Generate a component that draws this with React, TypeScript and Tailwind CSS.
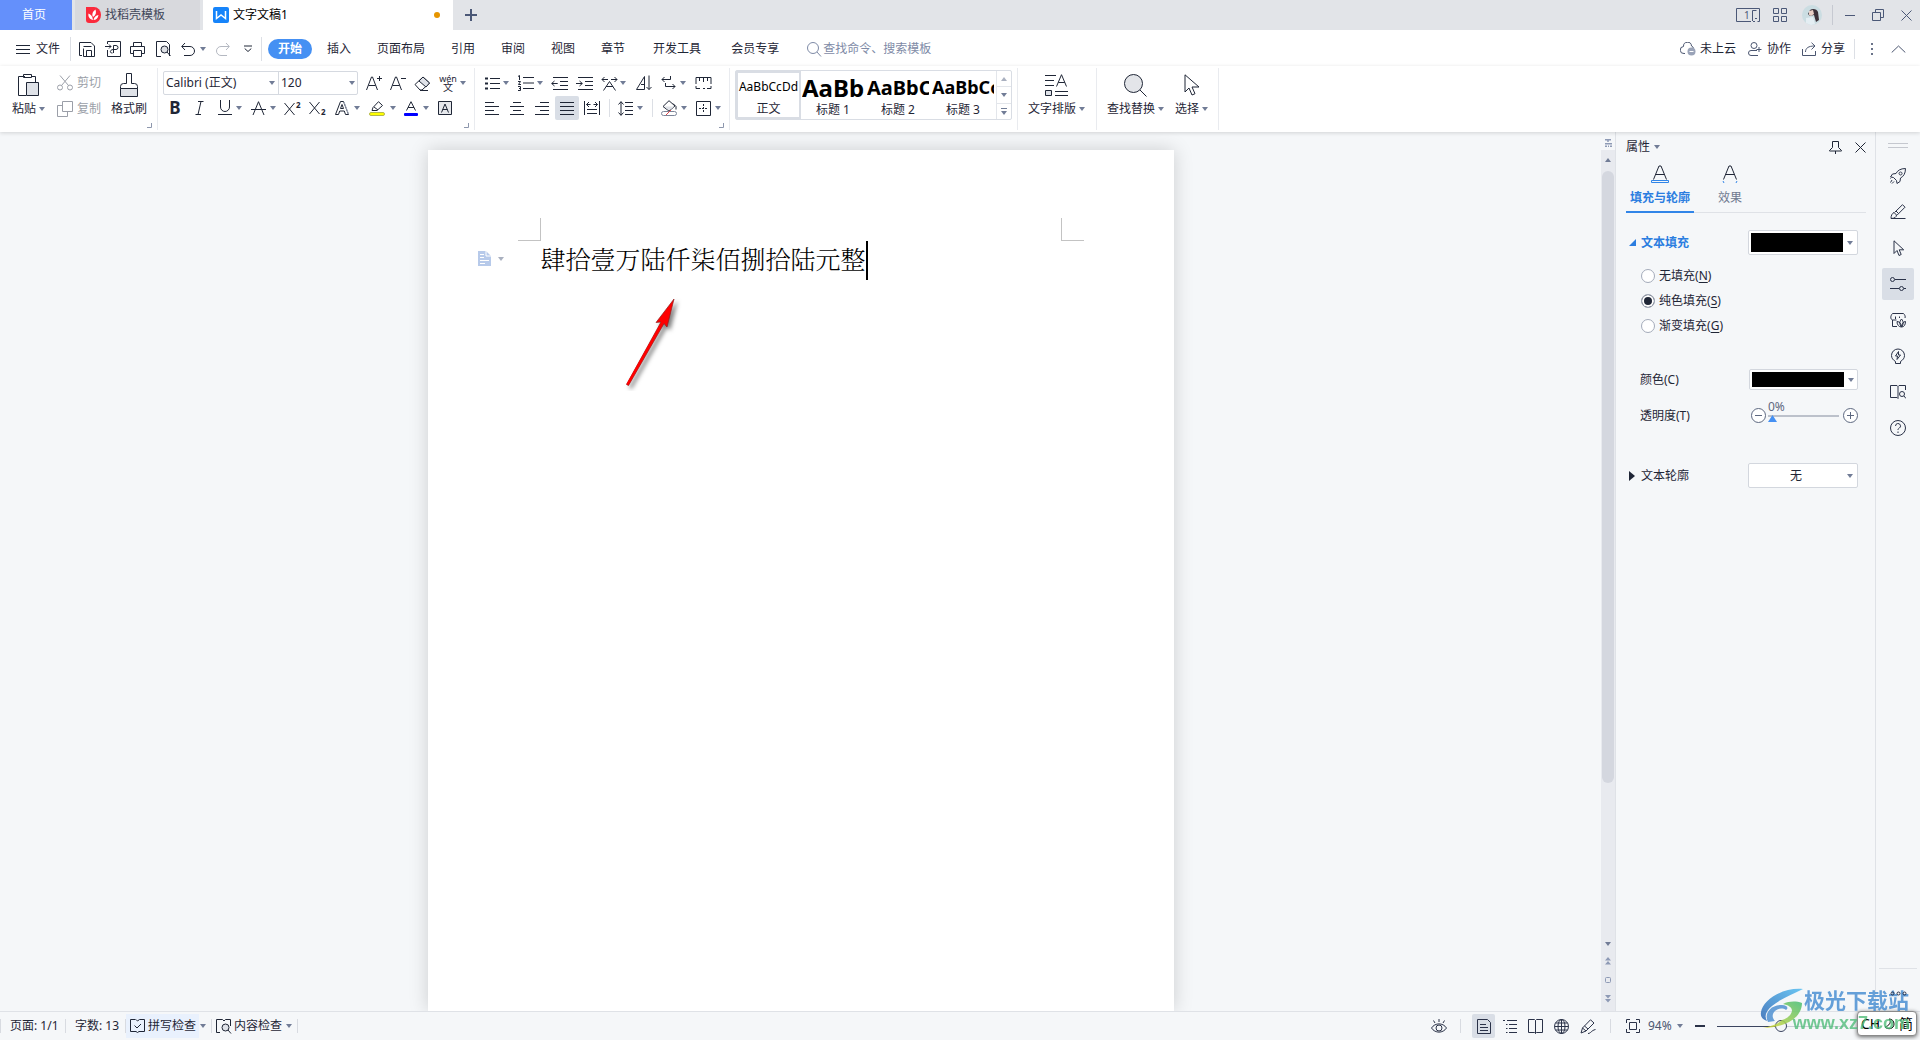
import React from "react";

type Kids = { children?: React.ReactNode };

function Ic({ w, h, sw = 1, className = "", children }: Kids & { w: number; h: number; sw?: number; className?: string }) {
  return (
    <svg width={w} height={h} viewBox={`0 0 ${w} ${h}`} fill="none" stroke="currentColor" strokeWidth={sw} className={"shrink-0 " + className} aria-hidden="true">
      {children}
    </svg>
  );
}

function Caret({ className = "" }: { className?: string }) {
  return (
    <svg width="6" height="4" viewBox="0 0 6 4" className={"shrink-0 text-[#717c96] " + className} aria-hidden="true">
      <path d="M0 0h6L3 4z" fill="currentColor" />
    </svg>
  );
}

function Btn({ label, className = "", children }: Kids & { label: string; className?: string }) {
  return (
    <button type="button" aria-label={label} title={label} className={"flex h-6 shrink-0 items-center " + className}>
      {children}
    </button>
  );
}

function Corner() {
  return (
    <Ic w={5} h={5} className="absolute bottom-[2px] right-[5px] text-[#8d97ad]">
      <path d="M4.500 0v4.500H0" />
    </Ic>
  );
}

function TitleBar() {
  return (
    <header className="flex h-[30px] shrink-0 bg-[#e2e4e8] text-xs">
      <button type="button" className="w-[72px] bg-[#6490fb] pr-1 text-white">首页</button>
      <button type="button" className="ml-[3px] flex w-[125px] items-center gap-1 bg-[#d8d9dd] pl-[11px] text-[#3f4659]">
        <svg width="15" height="16" viewBox="0 0 15 16" aria-hidden="true">
          <path d="M0 0h8a7 8 0 0 1 0 16H3a3 3 0 0 1-3-3z" fill="#fb2a3c" />
          <path d="M7 13C3 12 2 9 2.500 6.500 5 7.500 6.500 9 7 13zM7 10C5.500 7 7 4 9.500 2.500 10.500 5.500 10 8 7 10zM7.500 13C8 10 10 8.500 12.500 8 12 11.500 10 13 7.500 13z" fill="#fff" />
        </svg>
        找稻壳模板
      </button>
      <button type="button" className="ml-[3px] flex w-[250px] items-center bg-white pl-[10px] pr-[13px] text-black">
        <svg width="16" height="16" viewBox="0 0 16 16" className="mr-1" aria-hidden="true">
          <rect width="16" height="16" rx="2" fill="#1684fa" />
          <path d="M3.500 4v7.500L8 8l4.500 3.500V4" fill="none" stroke="#fff" strokeWidth="1.500" />
        </svg>
        文字文稿1
        <span className="ml-auto size-[6px] rounded-full bg-[#e69500]" />
      </button>
      <button type="button" aria-label="新建" className="flex w-9 items-center justify-center text-[#4b5877]">
        <Ic w={12} h={12} sw={2}><path d="M6 0v12M0 6h12" /></Ic>
      </button>
      <div className="ml-auto flex items-center pr-2 text-[#4b5877]">
        <button type="button" aria-label="窗口" className="mr-[13px]">
          <Ic w={24} h={14}>
            <path d="M15 13.500H.5V.5h23v13h-2M16.500 13V2.500h4M17 13.500h2M19 10.500h2" />
            <text x="8" y="11" fontSize="10" fill="currentColor" stroke="none">1</text>
          </Ic>
        </button>
        <button type="button" aria-label="应用" className="mr-[15px]">
          <Ic w={14} h={14}><path d="M.5.5h5v5h-5zM8.500.5h5v5h-5zM.5 8.500h5v5h-5zM8.500 8.500h5v5h-5z" /></Ic>
        </button>
        <button type="button" aria-label="用户">
          <svg width="20" height="20" viewBox="0 0 20 20" aria-hidden="true">
            <circle cx="10" cy="10" r="10" fill="#cbdde2" />
            <path d="M8 5c3-2 7-1 8 2l1 8-3 2-2-7-4 1-2-2z" fill="#3b3038" />
            <path d="M7 6l4-1 1 4-3 2-2-1z" fill="#e9cfc6" />
            <path d="M4 13l7-1 2 7-4 1-5-2z" fill="#e4eef3" />
          </svg>
        </button>
        <span className="ml-[10px] h-[20px] w-px bg-[#c6c9d1]" />
        <button type="button" aria-label="最小化" className="ml-3"><Ic w={10} h={12}><path d="M0 6.500h10" /></Ic></button>
        <button type="button" aria-label="还原" className="ml-[17px]">
          <Ic w={12} h={12}><path d="M.5 3.500h8v8h-8zM3.500 3.500v-3h8v8h-3" /></Ic>
        </button>
        <button type="button" aria-label="关闭" className="ml-[17px]"><Ic w={11} h={11}><path d="M.5.5l10 10M10.500.5l-10 10" /></Ic></button>
      </div>
    </header>
  );
}

const TABS = ["插入", "页面布局", "引用", "审阅", "视图", "章节"];

function MenuBar() {
  return (
    <nav className="flex h-9 shrink-0 items-center bg-white pt-[2px] text-xs text-[#1f2636]">
      <button type="button" className="ml-4 flex items-center gap-[6px]">
        <Ic w={14} h={11}><path d="M0 1.500h14M0 5.500h14M0 9.500h14" /></Ic>
        文件
      </button>
      <span className="ml-[10px] h-6 w-px bg-[#dcdfe5]" />
      <button type="button" aria-label="保存" className="ml-2">
        <Ic w={16} h={15}><path d="M12 .5H.5v13H3M12 .5l3.500 3.500v10.500h-11V6.500M7.500 14V8.500h5V14M4.500 4.500h8" /></Ic>
      </button>
      <button type="button" aria-label="输出为PDF" className="ml-[10px]">
        <Ic w={16} h={16}><path d="M2.500 3V.5h13v15h-13V9M0 5.500h6M4 3.500l2 2-2 2M8.500 12V4.500h2.500a2 2 0 0 1 0 4H8.500M8.500 8.500c-4 0-4 4-1 3.500" /></Ic>
      </button>
      <button type="button" aria-label="打印" className="ml-[9px]">
        <Ic w={15} h={15}><path d="M3.500 4.500v-4h8v4M3.500 11.500h-3v-7h14v7h-3M3.500 8.500h8v6h-8z" /></Ic>
      </button>
      <button type="button" aria-label="打印预览" className="ml-[11px]">
        <Ic w={15} h={16}><path d="M5 15.500H.5V.5h10l3 3V15" /><circle cx="8.500" cy="8.500" r="3.500" fill="#dfe1e5" /><path d="M11 11l3.500 4" /></Ic>
      </button>
      <button type="button" aria-label="撤销" className="ml-[10px]">
        <Ic w={14} h={13}><path d="M4 0L.7 3.500 4 7M1 3.500h8a4.500 4.500 0 0 1 0 9H3" /></Ic>
      </button>
      <Caret className="ml-[5px]" />
      <button type="button" aria-label="重做" className="ml-[10px] text-[#b4b8c1]">
        <Ic w={14} h={13}><path d="M10 0l3.300 3.500L10 7M13 3.500H5a4.500 4.500 0 0 0 0 9h6" /></Ic>
      </button>
      <button type="button" aria-label="自定义" className="ml-[14px]">
        <Ic w={8} h={8}><path d="M0 1h8M.7 3.500l3.300 3 3.300-3" /></Ic>
      </button>
      <span className="ml-[9px] h-6 w-px bg-[#dcdfe5]" />
      <button type="button" className="ml-[6px] h-5 w-11 rounded-full bg-[#4590f3] font-bold text-white">开始</button>
      <div className="ml-[2px] flex">
        {TABS.map((t) => (
          <button type="button" key={t} className="px-[13px]">{t}</button>
        ))}
        <button type="button" className="px-[15px]">开发工具</button>
        <button type="button" className="px-[15px]">会员专享</button>
      </div>
      <label className="ml-[13px] flex items-center text-[#7e8aa6]">
        <Ic w={15} h={15}><circle cx="6" cy="6" r="5.500" /><path d="M10 10l4 4.500" /></Ic>
        <input type="text" aria-label="查找" placeholder="查找命令、搜索模板" className="ml-px w-[120px] bg-transparent text-xs outline-none placeholder:text-[#7e8aa6]" />
      </label>
      <div className="ml-auto flex items-center pr-[14px]">
        <button type="button" className="flex items-center gap-1">
          <Ic w={16} h={14} className="text-[#4b5670]">
            <path d="M5 11.500H4A3.500 3.500 0 0 1 3.500 4.500 4 4 0 0 1 11.500 4" /><path d="M11.500 4a3 3 0 0 1 2 3" />
            <circle cx="11.500" cy="9.500" r="4" fill="#9aa3b8" stroke="none" /><path d="M9.500 9.500h4" stroke="#fff" />
          </Ic>
          未上云
        </button>
        <button type="button" className="ml-3 flex items-center gap-[5px]">
          <Ic w={14} h={14} className="text-[#4b5670]"><circle cx="6" cy="3.500" r="3" /><path d="M9 8.500H3a2.500 2.500 0 0 0 0 5h7M8.500 7.500h5M11 5v5" /></Ic>
          协作
        </button>
        <button type="button" className="ml-[11px] flex items-center gap-[5px]">
          <Ic w={14} h={14} className="text-[#4b5670]"><path d="M.5 7v6.500h13V9M3.500 10c0-4 3-6 9-6M9.500.7L13 4 9.500 7.500" /></Ic>
          分享
        </button>
        <span className="ml-[9px] h-5 w-px bg-[#dcdfe5]" />
        <button type="button" aria-label="更多" className="ml-4">
          <svg width="3" height="12" viewBox="0 0 3 12" fill="#6a7389"><path d="M0 0h2v2H0zM0 5h2v2H0zM0 10h2v2H0z" /></svg>
        </button>
        <button type="button" aria-label="收起" className="ml-[17px]"><Ic w={15} h={8} className="text-[#4b5670]"><path d="M.7 7.500l6.800-6.500 6.800 6.500" /></Ic></button>
      </div>
    </nav>
  );
}

function Group({ className = "", children }: Kids & { className?: string }) {
  return <section className={"relative flex h-[62px] shrink-0 border-r border-[#e9ebef] pt-[2px] " + className}>{children}</section>;
}

function BigBtn({ text, caret = true, className = "", children }: Kids & { text: string; caret?: boolean; className?: string }) {
  return (
    <button type="button" className={"flex flex-col items-center gap-[3px] pt-[3px] " + className}>
      <span className="flex h-6 items-center">{children}</span>
      <span className="flex items-center gap-[3px] leading-[18px]">{text}{caret && <Caret />}</span>
    </button>
  );
}

const STYLES = [
  { name: "标题 1", cls: "text-[24px]" },
  { name: "标题 2", cls: "text-[20px]" },
  { name: "标题 3", cls: "text-[18px]" },
];

function Ribbon() {
  return (
    <div className="z-10 flex h-[66px] shrink-0 bg-white pt-[2px] text-xs text-[#1f2636] shadow-[0_1px_4px_rgba(0,0,0,0.15)]">
      <Group className="w-[158px] pl-3">
        <BigBtn text="粘贴">
          <Ic w={21} h={24}><path d="M7 3.500H.5v19H8M14 3.500h3.500V9M5.500 1.500h8v3h-8z" /><path d="M8.500 9.500h12v13h-12z" fill="#dfe2e8" /></Ic>
        </BigBtn>
        <div className="ml-3 flex flex-col gap-[2px] pt-px text-[#9b9fa8]">
          <Btn label="剪切" className="gap-1">
            <Ic w={16} h={16}><circle cx="3" cy="12.500" r="2.500" /><circle cx="13" cy="12.500" r="2.500" /><path d="M3 .5l8.500 10M13 .5l-8.500 10" /></Ic>
            剪切
          </Btn>
          <Btn label="复制" className="gap-1">
            <Ic w={16} h={16}><path d="M5.500.5h10v10h-10zM5.500 4.500h-5v11h10v-5" /></Ic>
            复制
          </Btn>
        </div>
        <BigBtn text="格式刷" caret={false} className="ml-[10px]">
          <Ic w={18} h={24}><path d="M6.500 10.500V.5h5v10h3a3 3 0 0 1 3 3v2H.5v-2a3 3 0 0 1 3-3z" /><path d="M.5 15.500h17v8H.5z" fill="#dfe2e8" /></Ic>
        </BigBtn>
        <Corner />
      </Group>

      <Group className="w-[317px] flex-col gap-px pl-[5px]">
        <div className="flex items-center pt-px">
          <div className="flex h-6 rounded-[2px] border border-[#d5d9e0]">
            <label className="relative flex w-[115px] items-center border-r border-[#d5d9e0]">
              <select aria-label="字体" className="h-full w-full appearance-none bg-transparent pl-[2px] outline-none"><option>Calibri (正文)</option></select>
              <Caret className="pointer-events-none absolute right-[3px]" />
            </label>
            <label className="relative flex w-[78px] items-center">
              <select aria-label="字号" className="h-full w-full appearance-none bg-transparent pl-[2px] outline-none"><option>120</option></select>
              <Caret className="pointer-events-none absolute right-[2px]" />
            </label>
          </div>
          <Btn label="增大字号" className="ml-[8px]"><Ic w={16} h={16}><path d="M.5 15L5.500 2h1l5 13M2.500 10.500h7M11 3.500h5M13.500 1v5" /></Ic></Btn>
          <Btn label="减小字号" className="ml-2"><Ic w={16} h={16}><path d="M.5 15L5.500 2h1l5 13M2.500 10.500h7M11 3.500h5" /></Ic></Btn>
          <Btn label="清除格式" className="ml-2"><Ic w={17} h={15}><path d="M1 8.500L9 1l6.500 6L8 14H6z" /><path d="M5 5l7 6 3.500-4L9 1z" fill="#dfe2e8" /><path d="M6 14.500h8" /></Ic></Btn>
          <Btn label="拼音指南" className="ml-[9px] w-4 flex-col justify-center">
            <span className="h-[8px] text-[9px] leading-[8px]">wén</span>
            <span className="h-[8px] text-[10px] leading-[8px]">文</span>
          </Btn>
          <Caret className="ml-1" />
        </div>
        <div className="flex items-center">
          <Btn label="加粗" className="w-5 justify-center pl-1 text-[17px] font-bold">B</Btn>
          <Btn label="倾斜" className="ml-3"><Ic w={9} h={14}><path d="M3 .5h5.500M.5 13.500H6M6 .5l-3 13" /></Ic></Btn>
          <Btn label="下划线" className="ml-[14px]"><Ic w={14} h={16}><path d="M2.500 0v7a4.500 4.500 0 0 0 9 0V0M0 14.500h14" /></Ic></Btn>
          <Caret className="ml-[4px]" />
          <Btn label="删除线" className="ml-[9px]"><Ic w={15} h={15}><path d="M2 14L7.500.7 13 14M0 8.500h15" /></Ic></Btn>
          <Caret className="ml-[4px]" />
          <Btn label="上标" className="ml-2"><Ic w={18} h={15}><path d="M.5 2l10 12M10.500 2L.5 14" /><text x="12" y="7" fontSize="8" fontWeight="bold" fill="currentColor" stroke="none">2</text></Ic></Btn>
          <Btn label="下标" className="ml-[7px]"><Ic w={18} h={15}><path d="M.5 1l10 12M10.500 1L.5 13" /><text x="12" y="14" fontSize="8" fontWeight="bold" fill="currentColor" stroke="none">2</text></Ic></Btn>
          <Btn label="文字效果" className="ml-[8px]"><Ic w={14} h={14}><path d="M.5 13.500L5.500.5h3l5 13h-3L9.300 10H4.700l-1.200 3.500zM5.500 7.500h3L7 3.500z" /><path d="M9 1l4.500 12" stroke="#a3abbb" /></Ic></Btn>
          <Caret className="ml-[5px]" />
          <Btn label="突出显示" className="ml-[9px]"><Ic w={16} h={15}><path d="M3 9.500l1-3L9.500.7l4 3.800L8 9.500zM5 6l4 3" /><rect x=".5" y="11.500" width="15" height="3" rx="1.500" fill="#ffff00" stroke="#b5b84c" /></Ic></Btn>
          <Caret className="ml-[5px]" />
          <Btn label="字体颜色" className="ml-2"><Ic w={14} h={15}><path d="M2.500 9.500L7 .7l4.500 8.800M4 6.500h6" /><rect y="12" width="14" height="3" rx="1" fill="#0000ff" stroke="none" /></Ic></Btn>
          <Caret className="ml-[5px]" />
          <Btn label="字符底纹" className="ml-[9px]"><Ic w={14} h={14}><path d="M.5.5h13v13H.5z" fill="#e6e8ec" /><path d="M3.500 11.500L7 3l3.500 8.500M4.500 8.500h5" /></Ic></Btn>
        </div>
        <Corner />
      </Group>

      <Group className="w-[255px] flex-col gap-px pl-[10px]">
        <div className="flex items-center pt-px">
          <Btn label="项目符号"><Ic w={15} h={15}><path d="M5 2.500h10M5 7.500h10M5 12.500h10" /><path d="M0 2.500h3M0 7.500h3M0 12.500h3" strokeWidth="2" /></Ic></Btn>
          <Caret className="ml-[3px]" />
          <Btn label="编号" className="ml-[9px]"><Ic w={16} h={16}><path d="M5 2.500h11M5 8h11M5 13.500h11M0 1.500l1.500-1V5M0 6.500h2.500L.5 9.500h2.500M0 11.500h2.500v4H0M1 13.500h1" /></Ic></Btn>
          <Caret className="ml-[3px]" />
          <Btn label="减少缩进" className="ml-[8px]"><Ic w={17} h={13}><path d="M2 .5h15M9 4.500h8M9 8.500h8M2 12.500h15M.7 6.500h6M3.500 4L.7 6.500 3.500 9" /></Ic></Btn>
          <Btn label="增加缩进" className="ml-[8px]"><Ic w={17} h={13}><path d="M2 .5h15M9 4.500h8M9 8.500h8M2 12.500h15M0 6.500h6.300M3.500 4l2.800 2.500L3.500 9" /></Ic></Btn>
          <Btn label="中文版式" className="ml-[8px]"><Ic w={17} h={15}><path d="M2.500 14.500L8.500 5.500l6 9M5 10.500h7M1 3.500h6M3.500 1L1 3.500 3.500 6M10 3.500h6M13.500 1L16 3.500 13.500 6" /></Ic></Btn>
          <Caret className="ml-[2px]" />
          <Btn label="排序" className="ml-[10px]"><Ic w={16} h={16}><path d="M.5 14.500l8-13v13zM5 9.500h3.500M13 .5v14M10.500 12l2.500 2.500 2.500-2.500" /></Ic></Btn>
          <Btn label="显示标记" className="ml-[9px]"><Ic w={15} h={14}><path d="M3.500 1L1 3.500 3.500 6M1 3.500h8.500V0M4.500 7v3.500H14M11.500 8l2.500 2.500-2.500 2.500" /></Ic></Btn>
          <Caret className="ml-[4px]" />
          <Btn label="制表位" className="ml-[9px]"><Ic w={17} h={12}><path d="M1 7V.5h15V7M4.500 1v3M8.500 1v4M12.500 1v3M1 9v2.500h4M8 11.500h2M12 11.500h4V9" /></Ic></Btn>
        </div>
        <div className="flex items-center">
          <Btn label="左对齐"><Ic w={14} h={13}><path d="M0 .5h9M0 4.500h14M0 8.500h9M0 12.500h14" /></Ic></Btn>
          <Btn label="居中" className="ml-[11px]"><Ic w={14} h={13}><path d="M3 .5h8M0 4.500h14M3 8.500h8M0 12.500h14" /></Ic></Btn>
          <Btn label="右对齐" className="ml-[11px]"><Ic w={14} h={13}><path d="M5 .5h9M0 4.500h14M5 8.500h9M0 12.500h14" /></Ic></Btn>
          <Btn label="两端对齐" className="ml-[6px] w-6 justify-center rounded-[2px] bg-[#d9dee6]"><Ic w={14} h={13}><path d="M0 .5h14M0 4.500h14M0 8.500h14M0 12.500h14" /></Ic></Btn>
          <Btn label="分散对齐" className="ml-[5px]"><Ic w={16} h={14}><path d="M.5 0v14M15.500 0v14M2.500 3.500h4M9.500 3.500h4M5 1L2.500 3.500 5 6M11 1l2.500 2.500L11 6M3 8.500h10M3 12.500h10" /></Ic></Btn>
          <span className="ml-[9px] h-[18px] w-px bg-[#dcdfe5]" />
          <Btn label="行距" className="ml-[8px]"><Ic w={15} h={15}><path d="M7 1.500h8M7 5.500h8M7 9.500h8M7 13.500h8M3 .7v13.600M.5 3.500L3 .7l2.500 2.800M.5 11.500L3 14.300l2.500-2.800" /></Ic></Btn>
          <Caret className="ml-[4px]" />
          <span className="ml-[9px] h-[18px] w-px bg-[#dcdfe5]" />
          <Btn label="底纹颜色" className="ml-[8px]"><Ic w={16} h={16}><path d="M2 6.500L8 .7l6 5.300-6 5z" /><path d="M3 6.500h10.500L8 10.500z" fill="#dfe2e8" stroke="none" /><path d="M12 3.500l3 3v3" /><rect x=".5" y="11.500" width="15" height="4" rx="2" stroke="#7c8598" fill="#fff" /><path d="M5 15l5-5" stroke="#e0484d" /></Ic></Btn>
          <Caret className="ml-[4px]" />
          <Btn label="边框" className="ml-[9px]"><Ic w={15} h={15}><path d="M.5.5h14v14H.5z" /><path d="M7.500 3v9M3 7.500h9" strokeDasharray="2 1" /></Ic></Btn>
          <Caret className="ml-[4px]" />
        </div>
        <Corner />
      </Group>

      <Group className="w-[288px] pl-[5px]">
        <div className="flex h-[50px] rounded-[2px] border border-[#d9dde4]">
          <button type="button" className="flex w-[65px] flex-col items-center border-2 border-[#d9dde4]">
            <span className="h-[29px] text-xs leading-[28px] text-black">AaBbCcDd</span>
            <span className="leading-[16px]">正文</span>
          </button>
          {STYLES.map((s) => (
            <button type="button" key={s.name} className="flex w-[65px] flex-col items-center overflow-hidden pl-px pr-[2px] pt-[2px]">
              <span className={"h-[29px] w-full overflow-hidden whitespace-nowrap text-left font-bold leading-[29px] text-black " + s.cls}>AaBbCcDd</span>
              <span className="leading-[16px]">{s.name}</span>
            </button>
          ))}
          <div className="flex w-[15px] flex-col border-l border-[#e3e6eb]">
            <button type="button" aria-label="上一行" className="flex flex-1 items-center justify-center border-b border-[#e3e6eb]"><Caret className="rotate-180 opacity-60" /></button>
            <button type="button" aria-label="下一行" className="flex flex-1 items-center justify-center border-b border-[#e3e6eb]"><Caret /></button>
            <button type="button" aria-label="更多样式" className="flex flex-1 flex-col items-center justify-center gap-[2px]"><span className="h-px w-[6px] bg-[#717c96]" /><Caret /></button>
          </div>
        </div>
      </Group>

      <Group className="w-[79px] pl-[10px]">
        <BigBtn text="文字排版">
          <Ic w={23} h={23}><path d="M0 1.500h11M0 6.500h9M0 11.500h9M10 21.500h13M10 17.500h13M11.500 12.500L16.500.7l5 11.800M13.300 8.500h6.500" /><path d="M.5 16.500h6v5h-6z" fill="#dfe2e8" /></Ic>
        </BigBtn>
      </Group>
      <Group className="w-[122px] gap-[11px] pl-[10px]">
        <BigBtn text="查找替换">
          <Ic w={23} h={23}><circle cx="9.500" cy="9.500" r="9" fill="#e3e5e9" /><path d="M16 16l6.500 6.500" /></Ic>
        </BigBtn>
        <BigBtn text="选择">
          <Ic w={16} h={22}><path d="M1 .8v17.200l4-4 3 7 3-1.300-3-6.700h7z" /></Ic>
        </BigBtn>
      </Group>
    </div>
  );
}

function PageArea() {
  return (
    <main className="relative flex-1 overflow-hidden bg-[#f5f7f9] pt-[18px]">
      <article className="relative mx-auto h-full w-[746px] bg-white px-[90px] pt-[68px] shadow-[0_0_18px_rgba(0,0,0,0.17)]">
        <div className="flex justify-between">
          <span className="size-[23px] border-b border-r border-[#c3c3c3]" />
          <span className="size-[23px] border-b border-l border-[#c3c3c3]" />
        </div>
        <div className="flex h-[39px] pl-[23px] font-['Noto_Serif_CJK_SC','Noto_Sans_CJK_SC',serif] text-[25px] font-light leading-[34px] text-black">
          <p className="whitespace-nowrap">肆拾壹万陆仟柒佰捌拾陆元整</p>
          <span className="h-[39px] w-[2px] bg-black" />
        </div>
        <button type="button" aria-label="段落布局" className="absolute left-[50px] top-[101px] flex items-center gap-[7px]">
          <svg width="13" height="15" viewBox="0 0 13 15" aria-hidden="true">
            <path d="M0 0h8l5 5v10H0z" fill="#b7caea" />
            <path d="M8 0v5h5M2 3.500h4M2 6.500h4M2 9.500h9M2 12.500h5" stroke="#fff" fill="none" />
          </svg>
          <Caret className="opacity-60" />
        </button>
        <svg width="64" height="98" viewBox="0 0 64 98" className="absolute left-[190px] top-[143px]" aria-hidden="true">
          <g className="drop-shadow-[3px_3px_2px_rgba(0,0,0,0.5)]">
            <path d="M8.500 91.500L10.500 92.500 46 30.500 49 34 56 6 38 29.500 43 29z" fill="#fe0000" stroke="#8f1d1d" strokeWidth=".7" />
            <path d="M9.500 91.500L45 28.500" stroke="#fe0000" strokeWidth="2.500" />
          </g>
        </svg>
      </article>
    </main>
  );
}

function ScrollBar() {
  return (
    <div className="flex w-[14px] shrink-0 flex-col items-center bg-[#e8eaef] text-[#8e9ab5]">
      <div className="flex h-[18px] w-full items-center justify-center bg-[#f5f7f9] pt-1"><Ic w={8} h={8}><path d="M1 .8h6M4 1v2M1 7.200h2M4 7.200h1M6 7.200h2M1 4.800h7" strokeWidth="1.500" /></Ic></div>
      <Caret className="mt-2 rotate-180" />
      <div className="mt-[9px] h-[612px] w-3 rounded-full bg-[#d4d7df]" />
      <div className="mt-auto flex flex-col items-center pb-[8px]">
        <Caret />
        <svg width="6" height="8" viewBox="0 0 6 8" fill="currentColor" className="mt-[11px]"><path d="M3 0l3 3.500H0zM3 4l3 3.500H0z" /></svg>
        <Ic w={6} h={6} className="mt-3"><rect x=".5" y=".5" width="5" height="5" rx="1" /></Ic>
        <svg width="6" height="8" viewBox="0 0 6 8" fill="currentColor" className="mt-3"><path d="M3 3.500l3-3.500H0zM3 7.500L6 4H0z" /></svg>
      </div>
    </div>
  );
}

const FILLS = [
  { t: "无填充", k: "N" },
  { t: "纯色填充", k: "S" },
  { t: "渐变填充", k: "G" },
];

function Panel() {
  return (
    <aside className="flex w-[261px] shrink-0 flex-col border-x border-[#dfe2e7] bg-[#f5f7f9] pl-[10px] pr-[9px] text-xs text-[#1f2636]">
      <div className="flex h-[30px] items-center">
        <button type="button" className="flex items-center gap-[4px]">属性<Caret /></button>
        <button type="button" aria-label="固定" className="ml-auto"><Ic w={13} h={13}><path d="M3.500.5h6v6l3 3v.5H.5v-.5l3-3zM6.500 10v3" /></Ic></button>
        <button type="button" aria-label="关闭" className="ml-[13px]"><Ic w={11} h={11}><path d="M.5.5l10 10M10.500.5l-10 10" /></Ic></button>
      </div>
      <div className="flex h-[51px] border-b border-[#dfe2e7]">
        <button type="button" className="-mb-px flex w-[68px] flex-col items-center border-b-2 border-[#3185e8] font-bold text-[#2b7de0]">
          <Ic w={18} h={20} className="mt-[2px] text-[#1f2636]"><path d="M2.500 15.500L8 2h2l5.500 13.500M5 10.500h8" /><path d="M.5 16.500h17v2H.5z" stroke="#3185e8" /></Ic>
          <span className="mt-[6px]">填充与轮廓</span>
        </button>
        <button type="button" className="ml-[2px] flex w-[68px] flex-col items-center text-[#707a90]">
          <Ic w={18} h={20} className="mt-[2px] text-[#1f2636]"><path d="M2.500 15.500L8 2h2l5.500 13.500M5 10.500h8" /><path d="M2 17l1 2M16 17l-1 2" stroke="#3185e8" /></Ic>
          <span className="mt-[6px]">效果</span>
        </button>
      </div>
      <div className="pr-2">
        <div className="mt-[17px] flex h-[25px] items-center">
          <button type="button" className="flex items-center gap-[5px] pl-[3px] font-bold text-[#2b7de0]">
            <svg width="7" height="7" viewBox="0 0 7 7" fill="currentColor"><path d="M7 0v7H0z" /></svg>
            文本填充
          </button>
          <button type="button" aria-label="填充颜色" className="ml-auto flex h-[25px] w-[110px] items-center justify-between rounded-[2px] border border-[#d3d7de] bg-white pl-[2px] pr-1">
            <span className="h-[19px] w-[92px] bg-black" /><Caret />
          </button>
        </div>
        <div className="mt-[8px] flex flex-col pl-[15px]">
          {FILLS.map((f) => (
            <label key={f.k} className="flex h-[25px] items-center gap-1">
              <input type="radio" name="fill" defaultChecked={f.k === "S"} className="size-[14px] appearance-none rounded-full border border-[#a4abba] bg-white checked:bg-[#1f2636] checked:shadow-[inset_0_0_0_2px_#fff]" />
              <span>{f.t}(<u className="underline-offset-2">{f.k}</u>)</span>
            </label>
          ))}
        </div>
        <div className="mt-[31px] flex h-[21px] items-center pl-[14px]">
          颜色(C)
          <button type="button" aria-label="颜色" className="ml-auto flex h-[21px] w-[109px] items-center justify-between rounded-[2px] border border-[#d3d7de] bg-white pl-[2px] pr-[3px]">
            <span className="h-[15px] w-[92px] bg-black" /><Caret />
          </button>
        </div>
        <div className="mt-[15px] flex h-[21px] items-center pl-[14px]">
          <label htmlFor="opacity">透明度(T)</label>
          <button type="button" aria-label="减少" className="ml-auto text-[#5d6880]"><Ic w={15} h={15}><circle cx="7.500" cy="7.500" r="7" fill="#fff" /><path d="M4 7.500h7" /></Ic></button>
          <div className="relative mx-[2px] flex h-[21px] w-[71px] items-center">
            <output className="absolute -top-[6px] left-0 text-[#5f6880]">0%</output>
            <input id="opacity" type="range" defaultValue={0} className="h-[2px] w-full appearance-none bg-[#bcc1cb] [&::-webkit-slider-thumb]:mt-[6px] [&::-webkit-slider-thumb]:h-[7px] [&::-webkit-slider-thumb]:w-[9px] [&::-webkit-slider-thumb]:appearance-none [&::-webkit-slider-thumb]:bg-[#4590f3] [&::-webkit-slider-thumb]:[clip-path:polygon(50%_0,100%_100%,0_100%)]" />
          </div>
          <button type="button" aria-label="增加" className="ml-[2px] text-[#5d6880]"><Ic w={15} h={15}><circle cx="7.500" cy="7.500" r="7" fill="#fff" /><path d="M4 7.500h7M7.500 4v7" /></Ic></button>
        </div>
        <div className="mt-[37px] flex h-[25px] items-center">
          <button type="button" className="flex items-center gap-[6px] pl-[3px]">
            <svg width="6" height="10" viewBox="0 0 6 10" fill="#1f2636"><path d="M0 0l6 5-6 5z" /></svg>
            文本轮廓
          </button>
          <label className="relative ml-auto flex h-[25px] w-[110px] items-center rounded-[2px] border border-[#d3d7de] bg-white">
            <select aria-label="文本轮廓" className="h-full w-full appearance-none bg-transparent pl-[41px] outline-none"><option>无</option></select>
            <Caret className="pointer-events-none absolute right-1" />
          </label>
        </div>
      </div>
    </aside>
  );
}

const SIDE: { label: string; icon: React.ReactNode; on?: boolean }[] = [
  { label: "快捷", icon: <path d="M15.500.5c-5 0-8 2-9.500 5l-3.500.5-2 3 3 .5M15.500.5c0 5-2 8-5 9.500l-.5 3.500-3 2-.5-3M3.500 9.500l3 3M.5 11v-.5M2 12l-1.500 2.500M4 13.500L2 15.500M10.500 4a1.500 1.500 0 1 0 .1 0" /> },
  { label: "样式", icon: <path d="M1 14.500h14.500M1 14.500c0-3 1-5 3-6l2.500 2.500c0 2-2 3.500-5.500 3.500M4.500 8.500L12.500.7l2.500 2.500-8 8M6 7l2.500 2.500" /> },
  { label: "选择", icon: <path d="M4 .8v12.700l3-3 2 5 2.200-1-2-4.700h4.500z" /> },
  { label: "属性", on: true, icon: <><path d="M5 3.500h11M0 12.500h9M14 12.500h2" /><circle cx="2.500" cy="3.500" r="2" /><circle cx="11.500" cy="12.500" r="2" /></> },
  { label: "稻壳", icon: <><path d="M7 14.500H2.500V8C0 7 .5 3.500 2.500 1.500h11c1.500 1.500 2 3 1.500 4.500M5.500 4.500V7M9.500 4.500V6M2.500 8h4" /><path d="M11.500 7c-2.500 3-2 5.500 0 8 2-2.500 2.500-5 0-8zM7 9.500c0 3.500 2 5.500 4.500 5.500M7 9.500c3 0 4 2.500 4.500 5.500M15.500 9.500c0 3.500-1.500 5.500-4 5.500M15.500 9.500c-2.500 0-3.500 2.500-4 5.500" /></> },
  { label: "推荐", icon: <path d="M5.500 13.500C3 12 1.500 10 1.500 7.500a6.500 6.500 0 0 1 13 0c0 2.500-1.500 4.500-4 6v2h-5zM8.500 3.500l-3 4.500h2l-.5 3.500 3.500-4.500h-2z" /> },
  { label: "阅读", icon: <><path d="M8 14.500l-1-1H.5v-12H7l1 1 1-1h6.500V6M8 2.500v12" /><circle cx="12" cy="10" r="2.500" /><path d="M14 12l2 2.500" /></> },
  { label: "帮助", icon: <><circle cx="8" cy="8" r="7.500" /><path d="M5.500 6a2.500 2.500 0 1 1 3.700 2.200C8.300 8.700 8 9 8 10M8 11.500v1.500" /></> },
];

function SideBar() {
  return (
    <aside className="flex w-11 shrink-0 flex-col items-center bg-[#f5f7f9] text-[#2a3248]">
      <div className="mt-[11px] h-[5px] w-5 border-y border-[#c5c8cf]" />
      <div className="mt-3 flex flex-col gap-1">
        {SIDE.map((s) => (
          <button type="button" key={s.label} aria-label={s.label} className={"flex size-8 items-center justify-center rounded-[2px] " + (s.on ? "bg-[#d9dee6]" : "")}>
            <Ic w={16} h={16}>{s.icon}</Ic>
          </button>
        ))}
      </div>
      <div className="mt-auto flex h-[43px] w-[38px] justify-center border-t border-[#dfe2e7] pt-[22px]">
        <button type="button" aria-label="更多" className="relative z-30 h-[5px]"><Ic w={17} h={5} className="block"><circle cx="2.500" cy="2.500" r="1.500" /><circle cx="8.500" cy="2.500" r="1.500" /><circle cx="14.500" cy="2.500" r="1.500" /></Ic></button>
      </div>
    </aside>
  );
}

function Sep({ className = "" }: { className?: string }) {
  return <span className={"h-[14px] w-px shrink-0 bg-[#d8dbe1] " + className} />;
}

function StatusBar() {
  return (
    <footer className="flex h-[29px] shrink-0 items-center border-t border-[#dfe2e7] bg-[#f5f7f9] text-xs text-[#1f2636]">
      <Sep />
      <button type="button" className="w-16 pl-[9px] text-left">页面: 1/1</button>
      <Sep />
      <button type="button" className="w-[59px] pl-[9px] text-left">字数: 13</button>
      <Sep />
      <button type="button" className="flex h-6 w-[73px] items-center gap-[3px] bg-[#e9f1fd] pl-1">
        <Ic w={15} h={14}><path d="M5.500.5h-5v12H6l1.500 1 1.500-1h5.500V.5h-5L7.500 2 6 .5M4.500 6.500l2.500 2.500 4-4" /></Ic>拼写检查
      </button>
      <Caret className="ml-px" />
      <Sep className="ml-[5px]" />
      <button type="button" className="ml-1 flex items-center gap-[2px]">
        <Ic w={16} h={15}><path d="M4 13.500H.5V.5h6L8 2 9.500.5h5V7" /><circle cx="9.500" cy="8.500" r="3.500" fill="#dfe2e8" /><path d="M12 11l3 3.500" /></Ic>内容检查
      </button>
      <Caret className="ml-1" />
      <Sep className="ml-[5px]" />
      <div className="ml-auto flex items-center pr-[75px] text-[#2a3248]">
        <button type="button" aria-label="护眼模式"><Ic w={16} h={15}><path d="M.5 9C4 3.500 12 3.500 15.500 9 12 14.500 4 14.500.5 9zM8 0v3M2.500 1.500l1.500 2.500M13.500 1.500L12 4" /><circle cx="8" cy="9" r="3" /></Ic></button>
        <Sep className="ml-[13px]" />
        <button type="button" aria-label="页面视图" className="ml-[11px] flex h-6 w-[23px] items-center justify-center rounded-[2px] bg-[#d9dee6]"><Ic w={14} h={15}><path d="M.5.5h10l3 3v11H.5zM3 5.500h6M3 8.500h8M3 11.500h8" /></Ic></button>
        <button type="button" aria-label="大纲" className="ml-2"><Ic w={14} h={14}><path d="M0 1.500h2M4 1.500h10M3 5.500h1.500M6 5.500h8M3 9.500h1.500M6 9.500h8M3 13.500h1.500M6 13.500h8" /></Ic></button>
        <button type="button" aria-label="阅读版式" className="ml-[11px]"><Ic w={15} h={15}><path d="M7.500 14.500l-1-1H.5V.5h6l1 1 1-1h6v13h-6zM7.500 1.500v13" /></Ic></button>
        <button type="button" aria-label="Web版式" className="ml-[11px]"><Ic w={15} h={15}><circle cx="7.500" cy="7.500" r="7" /><ellipse cx="7.500" cy="7.500" rx="3.500" ry="7" /><path d="M.5 7.500h14M7.500.5v14M1.500 4h12M1.500 11h12" /></Ic></button>
        <button type="button" aria-label="写作模式" className="ml-[11px]"><Ic w={16} h={15}><path d="M1 14l1.500-5L10.500.8 14 4l-8 8zM2.500 9L6 12M4.500 7L8 10M8 14.500c3 0 3-3 7.500-4" /></Ic></button>
        <Sep className="ml-[14px]" />
        <button type="button" aria-label="最佳显示比例" className="ml-[15px]"><Ic w={14} h={14}><path d="M.5 4V.5H4M10 .5h3.500V4M13.500 10v3.500H10M4 13.500H.5V10M3.500 3.500h7v7h-7z" /></Ic></button>
        <button type="button" className="ml-2 flex w-[35px] items-center justify-between text-[#4b5670]">94%<Caret /></button>
        <button type="button" aria-label="缩小" className="ml-3"><Ic w={10} h={10} sw={2}><path d="M0 5h10" /></Ic></button>
        <input type="range" aria-label="缩放" defaultValue={50} className="ml-3 h-px w-[128px] appearance-none bg-[linear-gradient(90deg,#3b4560_50%,#c9cdd6_50%)] [&::-webkit-slider-thumb]:size-3 [&::-webkit-slider-thumb]:appearance-none [&::-webkit-slider-thumb]:rounded-full [&::-webkit-slider-thumb]:border [&::-webkit-slider-thumb]:border-[#3b4560] [&::-webkit-slider-thumb]:bg-[#f5f7f9]" />
      </div>
    </footer>
  );
}

function Overlay() {
  return (
    <div className="pointer-events-none absolute bottom-0 right-0 z-20 h-[52px] w-[160px]">
      <div className="absolute bottom-[4px] right-[3px] flex h-[25px] w-[60px] items-center justify-center gap-1 rounded-[4px] border border-[#8b8b8b] bg-white text-sm text-black shadow-[0_1px_4px_rgba(0,0,0,0.6)]">
        <span>CH</span>
        <Ic w={11} h={12}><path d="M5 1c3 3 0 7-4 8 3 3 9 2 9-3C10 3 8 1 5 1z" /></Ic>
        <span>简</span>
      </div>
      <svg width="44" height="42" viewBox="0 0 44 42" className="absolute left-0 top-0 opacity-85" aria-hidden="true">
        <defs>
          <linearGradient id="wave" x1="0" y1="1" x2="1" y2="0"><stop offset="0" stopColor="#2f68b5" /><stop offset="1" stopColor="#52bdf2" /></linearGradient>
          <linearGradient id="leaf" x1="0" y1="1" x2="1" y2="0"><stop offset="0" stopColor="#e0db38" /><stop offset="1" stopColor="#45bd74" /></linearGradient>
        </defs>
        <path d="M43 1C24-1 3 11 1 24c-1 6 3 8 6 9-3-5-1-10 5-15C20 11 33 6 43 1z" fill="url(#wave)" />
        <path d="M8 34c-4-7 1-17 14-17 5 0 7 3 4 5-3-2-8-2-11 1-4 4-2 8 0 10z" fill="#5192d2" />
        <path d="M42 15c0 13-13 24-39 25 9-2 15-4 19-8 6-2 9-5 10-9 0-4-4-6-9-7 6-3 13-3 19-1z" fill="url(#leaf)" />
      </svg>
      <div className="absolute right-[11px] top-0 whitespace-nowrap text-[21px] font-bold leading-[24px] text-[#4b90d3] opacity-85">极光下载站</div>
      <div className="absolute right-[10px] top-[23px] font-['Liberation_Sans',sans-serif] text-[18px] font-bold leading-6 text-[#52bd7b] opacity-80">www.xz7.com</div>
    </div>
  );
}

export default function App() {
  return (
    <div className="relative flex h-screen flex-col overflow-hidden bg-[#f5f7f9] font-['Noto_Sans','Noto_Sans_CJK_SC',sans-serif]">
      <TitleBar />
      <MenuBar />
      <Ribbon />
      <div className="flex min-h-0 flex-1">
        <PageArea />
        <ScrollBar />
        <Panel />
        <SideBar />
      </div>
      <StatusBar />
      <Overlay />
    </div>
  );
}
